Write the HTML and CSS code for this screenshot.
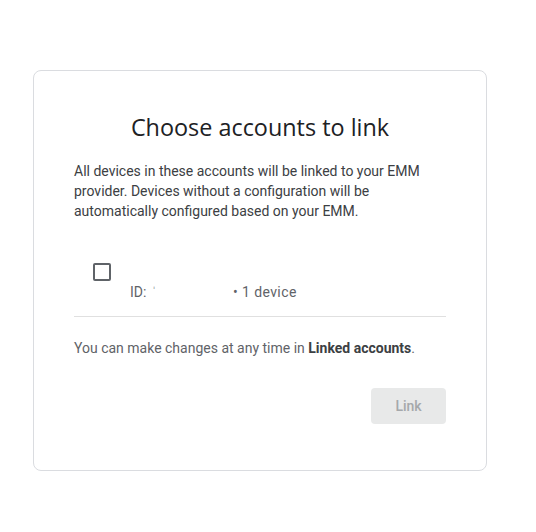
FILE: index.html
```html
<!DOCTYPE html>
<html lang="en">
<head>
<meta charset="utf-8">
<title>Choose accounts to link</title>
<link rel="stylesheet" href="styles.css">
</head>
<body>
<div class="card">
  <h1 class="title">Choose accounts to link</h1>
  <p class="desc">All devices in these accounts will be linked to your EMM provider. Devices without a configuration will be automatically configured based on your EMM.</p>
  <div class="account">
    <span class="checkbox"></span>
    <div class="meta"><span class="id">ID: <span class="redact">ˈ</span></span><span class="count">• 1 device</span></div>
  </div>
  <p class="note">You can make changes at any time in <b>Linked accounts</b>.</p>
  <div class="actions">
    <button class="btn" disabled>Link</button>
  </div>
</div>
</body>
</html>
```
FILE: styles.css
```css
html, body {
  margin: 0;
  padding: 0;
  background: #ffffff;
}
body {
  font-family: Roboto, "Liberation Sans", Arial, sans-serif;
  padding: 70px 0 0 33px;
}
.card {
  box-sizing: border-box;
  width: 454px;
  border: 1px solid #dadce0;
  border-radius: 8px;
  padding: 40px 40px 46px;
}
.title {
  margin: 0;
  font-family: "Open Sans", "Noto Sans", sans-serif;
  font-weight: 400;
  font-size: 23.4px;
  line-height: 32px;
  color: #202124;
  text-align: center;
}
.desc {
  margin: 18px 0 0;
  font-size: 14px;
  line-height: 20px;
  color: #3c4043;
}
.account {
  margin-top: 42px;
  padding: 0 0 14px 19px;
  border-bottom: 1px solid #e0e0e0;
}
.checkbox {
  display: block;
  box-sizing: border-box;
  width: 18px;
  height: 18px;
  border: 2px solid #5f6368;
  border-radius: 2px;
}
.meta {
  margin: 1px 0 0 37px;
  display: flex;
  font-size: 14px;
  line-height: 20px;
  color: #5f6368;
}
.id {
  width: 103px;
}
.redact {
  margin-left: 2px;
  color: #9aa0a6;
}
.count {
  letter-spacing: 0.4px;
}
.note {
  margin: 21px 0 0;
  font-size: 14px;
  line-height: 20px;
  color: #5f6368;
}
.note b {
  font-weight: 700;
  color: #3c4043;
}
.actions {
  margin-top: 30px;
  display: flex;
  justify-content: flex-end;
}
.btn {
  width: 75px;
  height: 36px;
  border: none;
  border-radius: 4px;
  background: #e8e9e9;
  color: #a5a8ab;
  font-family: Roboto, "Liberation Sans", Arial, sans-serif;
  font-weight: 500;
  font-size: 14px;
  padding: 0;
}
```
